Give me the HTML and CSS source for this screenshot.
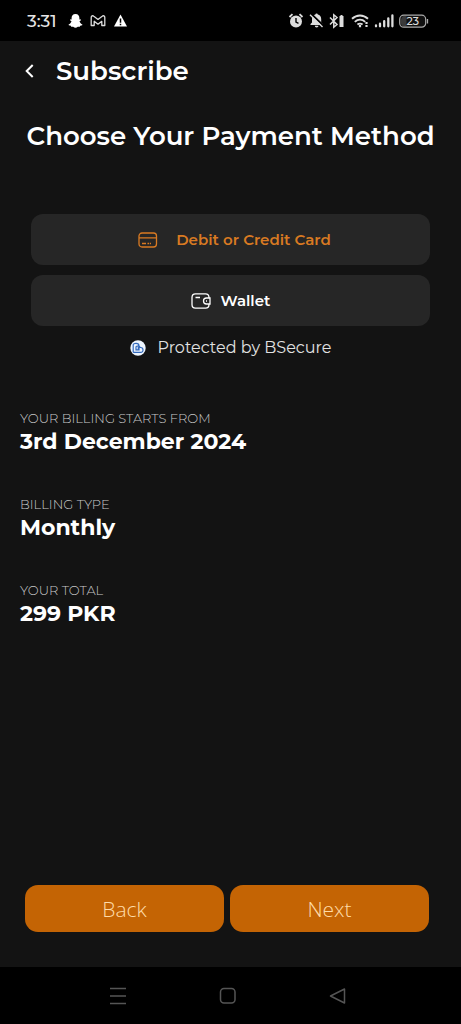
FILE: index.html
```html
<!DOCTYPE html>
<html lang="en">
<head>
<meta charset="utf-8">
<meta name="viewport" content="width=device-width, initial-scale=1">
<title>Subscribe</title>
<link rel="stylesheet" href="styles.css">
</head>
<body>
<div class="screen">
  <div class="status">
    <div class="status-left">
      <time class="clock">3:31</time>
      <svg class="notices" width="60" height="16" viewBox="0 0 60 16" aria-hidden="true">
        <path fill="#fff" d="M7.500 1C4.800 1 3.600 3 3.600 5v1.500L2.400 6.300 2 7.300l1.500.9C3 9.700 2 10.800.6 11.400L.8 12.300l2 .5.4 1 2-.1c.8.6 1.400 1 2.300 1s1.500-.4 2.300-1l2 .1.400-1 2-.5.2-.9c-1.400-.6-2.400-1.700-2.900-3.200L13 7.300l-.4-1-1.200.2V5c0-2-1.200-4-3.900-4z"/>
        <path fill="none" stroke="#ddd" stroke-width="1.300" stroke-linejoin="round" d="M23.200 12.500V4.600c0-1.800 1.500-2.300 2.600-1.400l4.200 3.200 4.200-3.200c1.100-.9 2.600-.4 2.600 1.400v7.900h-3V8.300L30 11.200l-3.800-2.900v4.200z"/>
        <path fill="#fff" d="M52.500 1.500 59 13.500H46z"/>
        <path stroke="#000" stroke-width="1.500" d="M52.500 5.500v4.200M52.500 10.700v1.500"/>
      </svg>
    </div>
    <svg width="142" height="18" viewBox="0 0 142 18" aria-hidden="true">
      <g fill="#ddd">
        <circle cx="9" cy="9.500" r="6"/>
        <path fill="none" stroke="#ddd" stroke-width="1.800" d="m2.500 5 3-2.800M15.500 5l-3-2.800"/>
        <path fill="none" stroke="#000" stroke-width="1.400" d="M9 6v4l2.500 1.300"/>
        <path d="M23.500 13v-1l1.500-1.500V7c0-2.400 1.500-3.900 3.400-4.400a1.200 1.200 0 0 1 2.400 0c2 .5 3.400 2 3.400 4.400v3.500l1.500 1.500v1zM27.800 13.800h3.700a1.850 1.700 0 0 1-3.700 0z"/>
        <path stroke="#000" stroke-width="2" d="m24.500 2.300 12.500 12"/>
        <path stroke="#ddd" stroke-width="1.400" d="m23 2.700 12.500 12.300"/>
        <path fill="none" stroke="#ddd" stroke-width="1.500" d="m43 5.500 7 7-3.200 2.700V2.800L50 5.500l-7 7"/>
        <path d="M52.500 4h1V3h2v1h1v11h-4z"/>
      </g>
      <g fill="none" stroke="#ddd" stroke-width="1.900">
        <path d="M65 6.800c4.800-4.400 11.200-4.400 16 0M67.800 9.900c3.100-2.800 7.300-2.800 10.400 0M70.400 12.600c1.700-1.300 3.500-1.300 5.200 0"/>
        <path stroke-width="2.200" d="M73 13v2.200M79.500 10v2M79.500 13v2"/>
        <path stroke-width="2.300" stroke-linecap="round" d="M89 13.500v.8M93 11.700v2.600M97.200 9.200v5.100M101.300 6.300v8M105.400 3.500v10.800"/>
      </g>
      <rect x="112.700" y="3.200" width="26" height="12" rx="4" fill="#111" stroke="#aaa" stroke-width="1.200"/>
      <path fill="#999" d="M116.500 4h3v10.500h-3c-4 0-3-10.500 0-10.500z" opacity=".3"/>
      <path stroke="#aaa" stroke-width="1.300" d="M140.500 7v4.500"/>
      <text class="battery" x="125.700" y="13" text-anchor="middle">23</text>
    </svg>
  </div>

  <header class="bar">
    <button class="back" aria-label="Go back"><svg width="20" height="20" viewBox="0 0 20 20"><path fill="none" stroke="#fff" stroke-width="2" d="m12.700 4-6 6 6 6"/></svg></button>
    <h1 class="title">Subscribe</h1>
  </header>

  <main class="main">
    <h2 class="heading">Choose Your Payment Method</h2>
    <div class="methods">
      <button class="method method-card">
        <svg width="20" height="18" viewBox="0 0 20 18" fill="none" stroke="currentColor" stroke-width="1.300" aria-hidden="true"><rect x="1" y="2" width="17.500" height="14" rx="3"/><path d="M1 6.800h17.500M4 12.500h4M9.500 12.500h1.700M12 12.500h1"/></svg>
        Debit or Credit Card
      </button>
      <button class="method method-wallet">
        <svg width="20" height="18" viewBox="0 0 20 18" fill="none" stroke="currentColor" stroke-width="1.300" aria-hidden="true"><path d="M18 6V5.500C18 3 16.700 1.800 14.500 1.800H4.500C2.300 1.800 1 3 1 5.500v7C1 15 2.300 16.200 4.500 16.200h10c2.200 0 3.500-1.200 3.500-3.700V12M19 6h-3.500a3 3 0 0 0 0 6H19zM4.500 5.500h4.500M15 9h1"/></svg>
        Wallet
      </button>
      <p class="protected">
        <svg width="16" height="16" viewBox="0 0 16 16" aria-hidden="true"><circle cx="8" cy="8" r="7.700" fill="#edf5ff"/><g fill="none" stroke="#3269bd" stroke-width="1.200"><path d="M3.200 12.300V5c0-2.200 5.800-2.300 5.800.8v4H6V7c0-1.500 4-1 4 .2M3.200 12.300h7.500c3.200 0 3-4.800 0-4.800H8.300v3"/></g></svg>
        Protected by BSecure
      </p>
    </div>
    <dl class="details">
      <div class="detail"><dt>YOUR BILLING STARTS FROM</dt><dd>3rd December 2024</dd></div>
      <div class="detail"><dt>BILLING TYPE</dt><dd>Monthly</dd></div>
      <div class="detail"><dt>YOUR TOTAL</dt><dd>299 PKR</dd></div>
    </dl>
    <div class="actions">
      <button class="action">Back</button>
      <button class="action">Next</button>
    </div>
  </main>

  <nav class="system" aria-label="System navigation">
    <button aria-label="Recent apps"><svg width="18" height="18" viewBox="0 0 18 18"><path d="M1 1.500h16M1 9h16M1 16.500h16"/></svg></button>
    <button aria-label="Home"><svg width="18" height="18" viewBox="0 0 18 18"><rect x="1.500" y="1.500" width="14.500" height="14.500" rx="3.500"/></svg></button>
    <button aria-label="Back"><svg width="18" height="18" viewBox="0 0 18 18"><path stroke-linejoin="round" d="M15.500 2v14L1.500 9z"/></svg></button>
  </nav>
</div>
</body>
</html>
```
FILE: styles.css
```css
* { box-sizing: border-box; }

body {
  margin: 0;
  background: #131313;
  color: #fff;
  font-family: Montserrat, Inter, sans-serif;
}

h1, h2, p, dl, dd { margin: 0; }

button {
  padding: 0;
  border: 0;
  background: none;
  color: inherit;
  font: inherit;
  cursor: pointer;
}

svg { display: block; flex: none; }

.screen {
  display: flex;
  flex-direction: column;
  min-height: 100vh;
}

.status {
  display: flex;
  align-items: center;
  justify-content: space-between;
  height: 41px;
  padding: 0 32px 0 27px;
  background: #000;
}

.status-left { display: flex; align-items: center; gap: 11px; }
.clock { font-size: 17px; font-weight: 500; color: #e6e6e6; }
.battery { font-size: 11px; font-weight: 500; fill: #ddd; }

.bar {
  display: flex;
  align-items: center;
  gap: 16px;
  height: 59px;
  padding: 0 20px;
}

.title { font-size: 26px; line-height: 32px; font-weight: 600; }

.main {
  display: flex;
  flex: 1;
  flex-direction: column;
  padding: 20px 20px 35px;
}

.heading {
  font-size: 26px;
  line-height: 32px;
  font-weight: 600;
  text-align: center;
}

.methods {
  display: flex;
  flex-direction: column;
  gap: 10px;
  padding: 62px 11px 0;
}

.method {
  display: flex;
  align-items: center;
  justify-content: center;
  height: 51px;
  border-radius: 12px;
  background: #262626;
  font-size: 15px;
  font-weight: 600;
}

.method-card { gap: 18px; padding-left: 8px; color: #d97a22; }
.method-wallet { gap: 10px; }

.protected {
  display: flex;
  align-items: center;
  justify-content: center;
  gap: 12px;
  font-size: 16px;
  line-height: 24px;
  color: #e2e2e2;
}

.details {
  display: flex;
  flex-direction: column;
  gap: 38px;
  padding-top: 48px;
}

.detail dt {
  font-size: 13px;
  line-height: 20px;
  font-weight: 300;
  color: #c8c8c8;
}

.detail dd { font-size: 22px; line-height: 28px; font-weight: 700; }

.actions {
  display: flex;
  gap: 6px;
  margin-top: auto;
  padding: 0 12px 0 5px;
}

.action {
  flex: 1;
  height: 47px;
  border-radius: 13px;
  background: #c46404;
  color: #ffdca9;
  font-family: "Open Sans", sans-serif;
  font-size: 21px;
  font-weight: 300;
}

.system {
  display: flex;
  justify-content: center;
  gap: 92px;
  height: 57px;
  padding-right: 6px;
  background: #000;
}

.system svg { fill: none; stroke: #555; stroke-width: 1.5; }
```
